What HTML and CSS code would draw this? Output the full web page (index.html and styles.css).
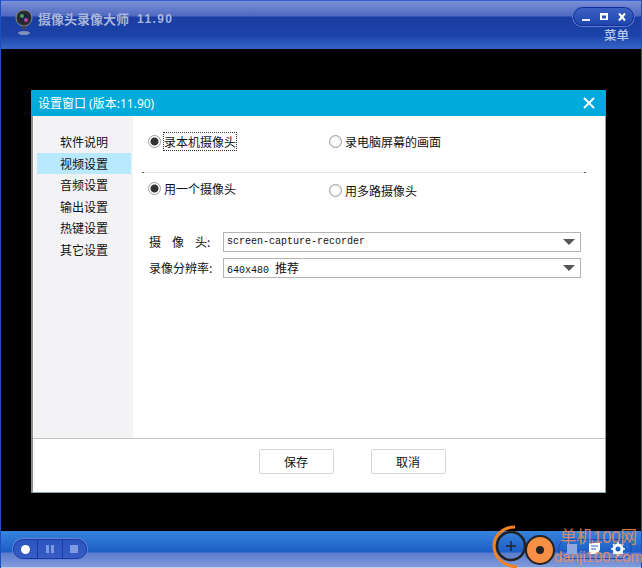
FILE: index.html
```html
<!DOCTYPE html>
<html lang="zh-CN">
<head>
<meta charset="utf-8">
<title>摄像头录像大师</title>
<link rel="stylesheet" href="styles.css">
</head>
<body>
<div class="window">
	<div class="top_bar">
		<svg class="cam_logo" width="20" height="28" viewBox="0 0 20 28">
			<ellipse cx="9" cy="25" rx="6" ry="2" fill="#7f8fb8"/>
			<circle cx="9" cy="10" r="8" fill="#2a2a30" stroke="#8a8a90"/>
			<circle cx="9" cy="10" r="4.5" fill="#182838"/>
			<circle cx="7" cy="8" r="2" fill="#3fa060"/>
			<circle cx="11" cy="12" r="2" fill="#c040b0"/>
			<rect x="7" y="18" width="4" height="3" fill="#444"/>
		</svg>
		<span class="app_title">摄像头录像大师</span>
		<span class="app_ver">11.90</span>
		<div class="top_right">
			<div class="win_btns">
				<svg width="12" height="12" viewBox="0 0 12 12"><rect x="2" y="8" width="8" height="2" fill="#f0e6ff"/></svg>
				<svg width="12" height="12" viewBox="0 0 12 12"><path d="M2 2h8v7H2z M4 4.500v3h4v-3z" fill="#fff" fill-rule="evenodd"/></svg>
				<svg width="12" height="12" viewBox="0 0 12 12"><path d="M3 2.500l6 7M9 2.500l-6 7" stroke="#fff" stroke-width="2"/></svg>
			</div>
			<a class="menu_link">菜单</a>
		</div>
	</div>

	<div class="stage">
		<div class="dialog">
			<div class="dialog_head">
				<span>设置窗口 (版本:11.90)</span>
				<svg width="12" height="12" viewBox="0 0 12 12"><path d="M1 1l10 10M11 1L1 11" stroke="#fff" stroke-width="2"/></svg>
			</div>
			<div class="dialog_body">
				<ul class="side_menu">
					<li>软件说明</li>
					<li class="on">视频设置</li>
					<li>音频设置</li>
					<li>输出设置</li>
					<li>热键设置</li>
					<li>其它设置</li>
				</ul>
				<div class="panel">
					<div class="radio_row first">
						<label class="radio checked"><i></i><span class="focus">录本机摄像头</span></label>
						<label class="radio"><i></i><span>录电脑屏幕的画面</span></label>
					</div>
					<div class="sep"></div>
					<div class="radio_row second">
						<label class="radio checked"><i></i><span>用一个摄像头</span></label>
						<label class="radio low"><i></i><span>用多路摄像头</span></label>
					</div>
					<div class="form_row">
						<span class="form_label"><span class="spaced">摄像</span>头:</span>
						<div class="select"><span class="mono">screen-capture-recorder</span><b></b></div>
					</div>
					<div class="form_row tight">
						<span class="form_label">录像分辨率:</span>
						<div class="select"><span class="mono">640x480 <span class="mono_cn">推荐</span></span><b></b></div>
					</div>
				</div>
			</div>
			<div class="dialog_foot">
				<button>保存</button>
				<button>取消</button>
			</div>
		</div>
	</div>

	<div class="bottom_bar">
		<div class="rec_btns">
			<span><i class="dot"></i></span>
			<span><i class="pause"></i></span>
			<span><i class="stop"></i></span>
		</div>
		<div class="tool_btns">
			<svg width="14" height="14" viewBox="0 0 14 14"><rect x="2" y="2" width="10" height="10" fill="#8fa8e0"/></svg>
			<svg width="14" height="14" viewBox="0 0 14 14"><path d="M1 1h11v7l-3 4H1z M3 3.500v1h7v-1z M3 6.500v1h5v-1z" fill="#fff" fill-rule="evenodd"/></svg>
			<svg width="14" height="14" viewBox="0 0 14 14"><circle cx="7" cy="7" r="4" fill="none" stroke="#fff" stroke-width="3"/><path d="M7 0v14M0 7h14M2 2l10 10M12 2L2 12" stroke="#fff" stroke-width="1.500" stroke-dasharray="2 10 2"/></svg>
		</div>
	</div>

	<div class="watermark">
		<svg width="76" height="56" viewBox="0 0 76 56">
			<path d="M30 15C17 15 9 24 9 34c0 11 9 20 23 21" fill="none" stroke="#f58220" stroke-width="3"/>
			<circle cx="26" cy="34" r="14" fill="none" stroke="#222" stroke-width="2.500"/>
			<path d="M21 34h10M26 29v10" stroke="#222" stroke-width="1.500"/>
			<circle cx="55" cy="38" r="14" fill="#f79044" stroke="#222" stroke-width="2"/>
			<circle cx="55" cy="38" r="4" fill="#222"/>
		</svg>
		<div class="wm_text">
			<span class="wm_cn">单机100网</span>
			<span class="wm_en">danji100.com</span>
		</div>
	</div>
</div>
</body>
</html>
```
FILE: styles.css
```css
* {margin:0; padding:0; box-sizing:border-box}
li {list-style:none}
html, body {height:100%}
body {
	width:642px;
	height:568px;
	overflow:hidden;
	font-family:"Noto Sans CJK SC", sans-serif;
	font-size:12px;
	color:#111;
	background:#000;
}

.window {
	position:relative;
	display:flex;
	flex-direction:column;
	width:642px;
	height:568px;
	border-left:1px solid #1c4fc0;
	border-right:1px solid #1c4fc0;
}

/* top bar */
.top_bar {
	display:flex;
	align-items:flex-start;
	height:49px;
	padding:6px 7px 0 14px;
	border-top:1px solid #2f5fd0;
	background:linear-gradient(#7b90d8 0, #4f69c0 15px, #1a3ea2 16px, #1c42a8 34px, #3466c6 48px);
}
.cam_logo {flex:none; margin:1px 3px 0 0}
.app_title {
	margin-top:3px;
	font-size:13px;
	font-weight:700;
	line-height:18px;
	color:#a9b6dc;
}
.app_ver {
	margin:3px 0 0 8px;
	font-family:"Liberation Sans", sans-serif;
	font-size:12px;
	font-weight:700;
	line-height:18px;
	letter-spacing:1.400px;
	color:#a9b6dc;
}
.top_right {
	display:flex;
	flex-direction:column;
	align-items:flex-end;
	margin-left:auto;
}
.win_btns {
	display:flex;
	justify-content:center;
	align-items:center;
	gap:6px;
	width:61px;
	height:19px;
	border:1px solid #16309a;
	border-radius:10px;
	background:linear-gradient(#3c60c4, #1e47ae);
	box-shadow:0 0 0 1px #5f7bd0;
}
.menu_link {
	margin:0 5px 0 0;
	font-size:12.500px;
	font-weight:500;
	line-height:18px;
	color:#bcc8e6;
}

/* dialog */
.stage {
	flex:1;
	padding:41px 0 0 30px;
}
.dialog {
	display:flex;
	flex-direction:column;
	width:575px;
	height:403px;
	background:#fff;
	border-left:2px solid #8c8c8c;
	border-right:1px solid #999;
	border-bottom:1px solid #8fa5ad;
}
.dialog_head {
	display:flex;
	flex:none;
	justify-content:space-between;
	align-items:center;
	height:26px;
	margin:0 -1px 0 -2px;
	padding:0 11px 0 7px;
	font-family:"Noto Sans", "Noto Sans CJK SC", sans-serif;
	font-size:12px;
	color:#fff;
	background:#00abdb;
}
.dialog_body {
	display:flex;
	flex:none;
	height:323px;
	border-bottom:1px solid #c4c4c4;
}
.side_menu {
	flex:none;
	width:99px;
	padding:15px 2px 0 3px;
	margin-left:1px;
	background:#f3f3f5;
}
.side_menu li {
	height:21.500px;
	padding-left:23px;
	font-size:12px;
	line-height:21.500px;
}
.side_menu li.on {background:#b9e9ff}

.panel {
	flex:1;
	padding:15px 19px 0 9px;
}
.radio_row {
	display:flex;
	padding-left:6px;
}
.radio_row.first {height:41px}
.radio_row.second {height:55px; padding-top:5px}
.radio {
	display:flex;
	align-items:center;
	gap:3px;
	width:181px;
	height:20px;
}
.radio.low {margin-top:2px}
.radio i {
	flex:none;
	width:13px;
	height:13px;
	border:1px solid #a0a0a0;
	border-radius:50%;
	background:radial-gradient(#fff 40%, #d8d8d8);
}
.radio.checked i {background:radial-gradient(#333 3.500px, #fff 4.500px)}
.focus {outline:1px dotted #333}
.sep {
	height:1px;
	border-left:2px solid #555;
	border-right:2px solid #555;
	background:#e8e8e8;
}
.form_row {
	display:flex;
	align-items:center;
	height:27px;
	padding-left:7px;
}
.form_row.tight {height:26px}
.form_label {
	flex:none;
	width:74px;
	line-height:14px;
	white-space:nowrap;
}
.spaced {letter-spacing:11px}
.select {
	display:flex;
	justify-content:space-between;
	align-items:center;
	width:358px;
	height:20px;
	padding:0 3px;
	border:1px solid #b4b4b4;
	background:#fff;
}
.mono {
	font-family:"Liberation Mono", "Noto Sans CJK SC", monospace;
	font-size:10px;
}
.mono_cn {font-size:12px}
.select b {
	width:0;
	height:0;
	border-style:solid;
	border-width:6px 6px 0;
	border-color:#555 transparent transparent;
	margin-right:2px;
}

.dialog_foot {
	display:flex;
	justify-content:center;
	gap:37px;
	padding-top:10px;
	padding-left:66px;
}
.dialog_foot button {
	width:75px;
	height:25px;
	border:1px solid #d4d4d4;
	border-radius:2px;
	background:#fff;
	font:12px "Noto Sans CJK SC", sans-serif;
	color:#111;
}

/* bottom bar */
.bottom_bar {
	display:flex;
	justify-content:space-between;
	align-items:center;
	height:37px;
	padding:0 9px 0 12px;
	border-bottom:1px solid #c0d0f0;
	background:linear-gradient(#3784dc 0, #1d5dc6 21px, #5b7ccc 22px, #819bda 36px);
}
.rec_btns {
	display:flex;
	height:20px;
	width:74px;
	border:1px solid #1c3aa6;
	border-radius:10px;
	background:linear-gradient(#2a55c0, #3a5cc4);
	box-shadow:0 0 0 1px #5f80d4;
}
.rec_btns span {
	display:flex;
	flex:1;
	justify-content:center;
	align-items:center;
}
.rec_btns span + span {border-left:1px solid #1c3aa6}
.dot {width:9px; height:9px; border-radius:50%; background:#fff}
.pause {width:8px; height:8px; border-left:3px solid #7d9ae0; border-right:3px solid #7d9ae0}
.stop {width:8px; height:8px; background:#7d9ae0}
.tool_btns {
	display:flex;
	justify-content:center;
	align-items:center;
	gap:9px;
	width:74px;
	height:20px;
	border:1px solid #2148b0;
	border-radius:10px;
}

/* watermark over the bottom bar */
.watermark {
	position:absolute;
	right:0;
	bottom:0;
	display:flex;
	align-items:flex-end;
	height:56px;
}
.watermark svg {margin-right:-5px}
.wm_text {
	display:flex;
	flex-direction:column;
	align-items:center;
	width:85px;
	font-family:"Liberation Sans", "Noto Sans CJK SC", sans-serif;
	color:#f0915a;
	opacity:.85;
}
.wm_cn {font-size:16.500px; line-height:22px}
.wm_en {font-size:15px; line-height:18px; white-space:nowrap; margin-bottom:2px}
```
